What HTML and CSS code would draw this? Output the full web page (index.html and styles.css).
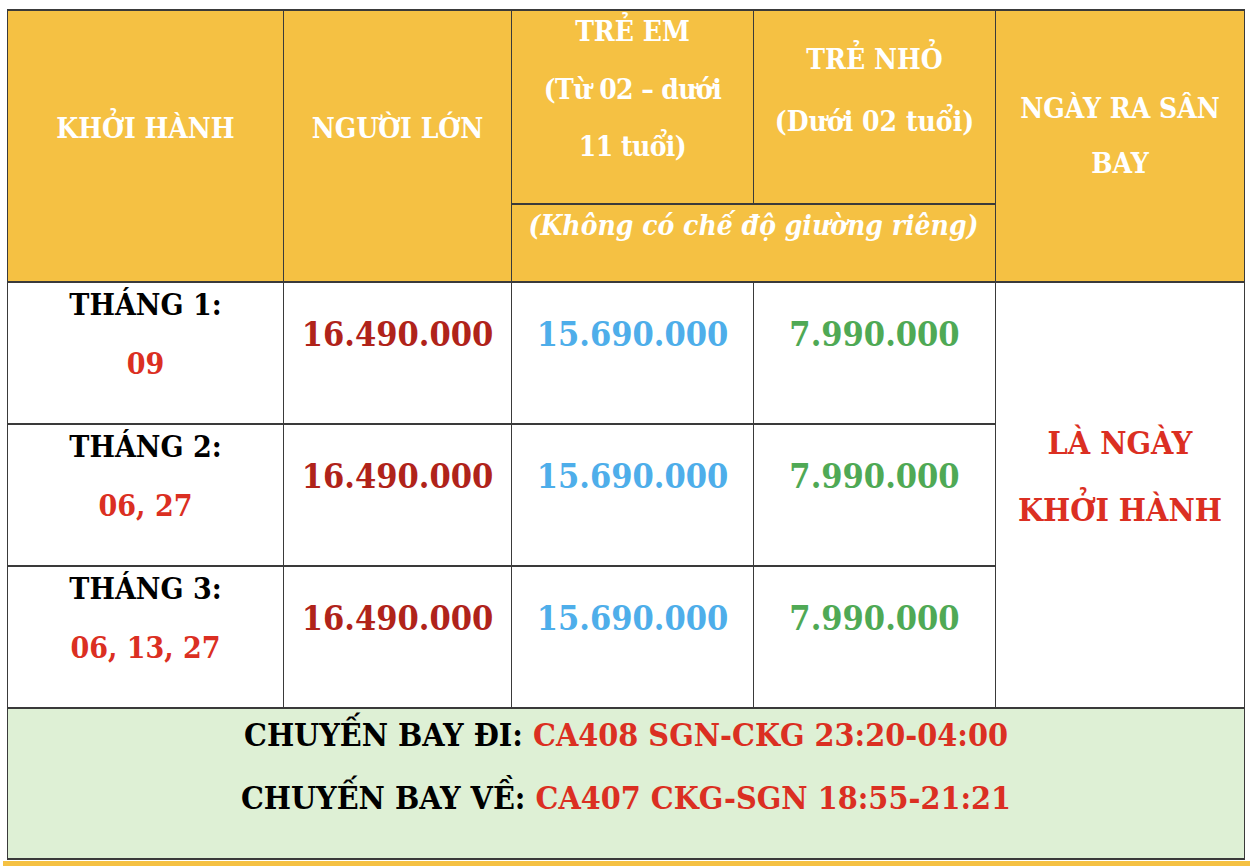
FILE: index.html
```html
<!DOCTYPE html>
<html lang="vi">
<head>
<meta charset="utf-8">
<title>Bảng giá tour</title>
<link rel="stylesheet" href="styles.css">
</head>
<body>
<table class="price">
  <colgroup>
    <col class="c1"><col class="c2"><col class="c3"><col class="c4"><col class="c5">
  </colgroup>
  <tr class="head-a">
    <th rowspan="2" class="h-depart"><div class="ln">KHỞI HÀNH</div></th>
    <th rowspan="2" class="h-adult"><div class="ln">NGƯỜI LỚN</div></th>
    <th class="h-child"><div class="ln">TRẺ EM</div><div class="ln tight">(Từ 02 – dưới</div><div class="ln tight">11 tuổi)</div></th>
    <th class="h-infant"><div class="ln">TRẺ NHỎ</div><div class="ln">(Dưới 02 tuổi)</div></th>
    <th rowspan="2" class="h-airport"><div class="ln">NGÀY RA SÂN</div><div class="ln">BAY</div></th>
  </tr>
  <tr class="head-b">
    <th colspan="2" class="h-note"><div class="ln">(Không có chế độ giường riêng)</div></th>
  </tr>
  <tr class="row">
    <td class="month"><div class="ln">THÁNG 1:</div><div class="ln days">09</div></td>
    <td class="price-cell"><div class="ln adult">16.490.000</div></td>
    <td class="price-cell"><div class="ln child">15.690.000</div></td>
    <td class="price-cell"><div class="ln infant">7.990.000</div></td>
    <td rowspan="3" class="airport"><div class="ln">LÀ NGÀY</div><div class="ln">KHỞI HÀNH</div></td>
  </tr>
  <tr class="row">
    <td class="month"><div class="ln">THÁNG 2:</div><div class="ln days">06, 27</div></td>
    <td class="price-cell"><div class="ln adult">16.490.000</div></td>
    <td class="price-cell"><div class="ln child">15.690.000</div></td>
    <td class="price-cell"><div class="ln infant">7.990.000</div></td>
  </tr>
  <tr class="row">
    <td class="month"><div class="ln">THÁNG 3:</div><div class="ln days">06, 13, 27</div></td>
    <td class="price-cell"><div class="ln adult">16.490.000</div></td>
    <td class="price-cell"><div class="ln child">15.690.000</div></td>
    <td class="price-cell"><div class="ln infant">7.990.000</div></td>
  </tr>
  <tr class="flight">
    <td colspan="5">
      <div class="ln">CHUYẾN BAY ĐI: <span class="code">CA408 SGN-CKG 23:20-04:00</span></div>
      <div class="ln">CHUYẾN BAY VỀ: <span class="code">CA407 CKG-SGN 18:55-21:21</span></div>
    </td>
  </tr>
</table>
<div class="next"></div>
</body>
</html>
```
FILE: styles.css
```css
html, body {
  margin: 0;
  padding: 0;
  background: #ffffff;
}

body {
  font-family: "DejaVu Serif", "Liberation Serif", serif;
  font-weight: bold;
  font-stretch: condensed;
  overflow: hidden;
}

.price {
  margin: 9px 0 0 7px;
  width: 1237px;
  table-layout: fixed;
  border-collapse: collapse;
}

.c1 { width: 276px; }
.c2 { width: 228px; }
.c3 { width: 242px; }
.c4 { width: 242px; }
.c5 { width: 249px; }

.price th,
.price td {
  border-left: 1px solid #3a3a3a;
  border-right: 1px solid #3a3a3a;
  border-top: 2px solid #3a3a3a;
  border-bottom: 2px solid #3a3a3a;
  padding: 0;
  text-align: center;
  vertical-align: top;
}

.ln {
  line-height: 1.2;
  white-space: nowrap;
}

/* header */
.price th {
  background: #f5c143;
  color: #ffffff;
  font-size: 28px;
  font-weight: bold;
}

.head-a { height: 194px; }
.head-b { height: 78px; }

.price .h-depart,
.price .h-adult { padding-top: 101px; }

.price .h-child { padding-top: 4px; }
.h-child .ln + .ln { margin-top: 24px; }
.tight { letter-spacing: -0.6px; }

.price .h-infant { padding-top: 32px; }
.h-infant .ln + .ln { margin-top: 28px; }

.price .h-airport { padding-top: 81px; }
.h-airport .ln + .ln { margin-top: 21px; }

.price th.h-note {
  font-size: 28px;
  font-style: italic;
  padding-top: 4px;
}

/* body rows */
.row { height: 142px; }

.price td { background: #ffffff; }

.price td.month {
  font-size: 30px;
  color: #000000;
  padding-top: 4px;
}
.month .ln + .ln { margin-top: 23px; }
.days { color: #db2f22; }

.price td.price-cell {
  font-size: 34px;
  padding-top: 31px;
}
.adult { color: #b0231a; }
.child { color: #4eaeea; }
.infant { color: #4fa955; }

.price td.airport {
  font-size: 32px;
  color: #db2f22;
  padding-top: 141px;
}
.airport .ln + .ln { margin-top: 29px; }

/* flight row */
.price .flight td {
  background: #def0d5;
  height: 142px;
  font-size: 32px;
  color: #000000;
  padding-top: 7px;
}
.flight .ln + .ln { margin-top: 25px; }
.code { color: #db2f22; }

/* next block (cut off) */
.next {
  margin: 1px 0 0 3px;
  width: 1247px;
  height: 60px;
  background: #f5c143;
}
```
